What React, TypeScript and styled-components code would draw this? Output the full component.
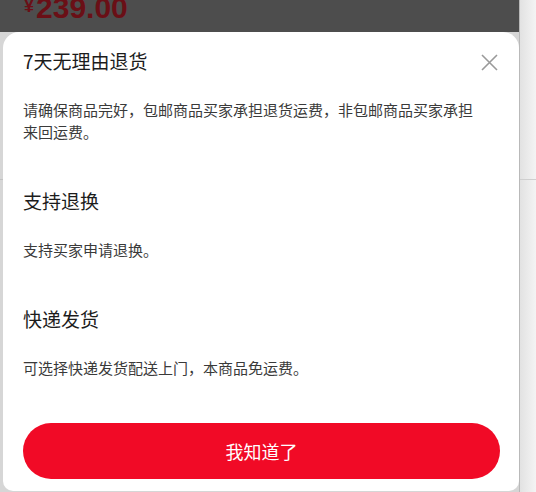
import React from "react";
import styled, { createGlobalStyle } from "styled-components";

const GlobalStyle = createGlobalStyle`
  html, body {
    margin: 0;
    padding: 0;
    width: 536px;
    height: 492px;
    overflow: hidden;
    background: #ececec;
  }
  * { box-sizing: border-box; }
`;

const Page = styled.div`
  display: grid;
  grid-template-columns: 519px 17px;
  width: 536px;
  height: 492px;
  font-family: "Noto Sans CJK SC", "Noto Sans", sans-serif;
`;

const MainColumn = styled.div`
  display: flex;
  flex-direction: column;
  height: 492px;
`;

const RightRail = styled.div`
  position: relative;
  height: 492px;
  border-left: 1px solid #b9b9b9;
  background: linear-gradient(to right, #e2e2e2, #f4f4f4);
  &::after {
    content: "";
    position: absolute;
    left: 0;
    right: 0;
    top: 179px;
    height: 1px;
    background: #cfcfcf;
  }
`;

const TopBar = styled.div`
  height: 32px;
  flex: none;
  background: #4d4d4d;
  display: flex;
  align-items: flex-start;
  padding-left: 24px;
  overflow: hidden;
`;

const Price = styled.div`
  display: flex;
  align-items: flex-start;
  color: #6a0f16;
  font-family: "Liberation Sans", Arial, sans-serif;
  font-weight: 700;
  margin-top: -7px;
`;

const Currency = styled.span`
  font-size: 18px;
  line-height: 18px;
  margin-top: 4px;
  margin-right: 2px;
  font-weight: 700;
`;

const Amount = styled.span`
  font-size: 30px;
  line-height: 30px;
`;

const Body = styled.div`
  flex: 1;
  display: flex;
  background: #d6d6d6;
`;

const LeftStrip = styled.div`
  width: 3px;
  flex: none;
  position: relative;
  &::after {
    content: "";
    position: absolute;
    left: 0;
    right: 0;
    top: 147px;
    height: 1px;
    background: #c2c2c2;
  }
`;

const Sheet = styled.div`
  width: 516px;
  height: 459px;
  background: #ffffff;
  border-radius: 16px 16px 10px 10px;
  padding: 16px 19px 12px 20px;
  display: flex;
  flex-direction: column;
`;

const Header = styled.div`
  display: flex;
  align-items: center;
  justify-content: space-between;
`;

const Title = styled.h2`
  margin: 0;
  font-size: 19px;
  line-height: 26px;
  font-weight: 400;
  color: #1c1c1c;
`;

const CloseButton = styled.button`
  border: none;
  background: transparent;
  padding: 0;
  width: 18px;
  height: 18px;
  margin-right: 2px;
  margin-top: 2px;
  display: flex;
  align-items: center;
  justify-content: center;
  cursor: pointer;
`;

const Section = styled.section<{ $first?: boolean }>`
  margin-top: ${(p) => (p.$first ? "0" : "45px")};
`;

const Desc = styled.p`
  margin: 25px 0 0;
  max-width: 455px;
  font-size: 15px;
  line-height: 22px;
  color: #3a3a3a;
`;

const Spacer = styled.div`
  flex: 1;
`;

const ConfirmButton = styled.button`
  width: 477px;
  height: 56px;
  border: none;
  border-radius: 28px;
  background: #f10a26;
  color: #ffffff;
  font-family: "Noto Sans CJK SC", "Noto Sans", sans-serif;
  font-size: 18px;
  line-height: 56px;
  padding: 0;
  cursor: pointer;
`;

const sections = [
  {
    title: "7天无理由退货",
    desc: "请确保商品完好，包邮商品买家承担退货运费，非包邮商品买家承担来回运费。",
  },
  { title: "支持退换", desc: "支持买家申请退换。" },
  { title: "快递发货", desc: "可选择快递发货配送上门，本商品免运费。" },
];

export default function App() {
  return (
    <>
      <GlobalStyle />
      <Page>
        <MainColumn>
          <TopBar>
            <Price>
              <Currency>¥</Currency>
              <Amount>239.00</Amount>
            </Price>
          </TopBar>
          <Body>
            <LeftStrip />
            <Sheet>
              {sections.map((s, i) => (
                <Section key={s.title} $first={i === 0}>
                  {i === 0 ? (
                    <Header>
                      <Title>{s.title}</Title>
                      <CloseButton aria-label="关闭">
                        <svg width="17" height="17" viewBox="0 0 17 17">
                          <path
                            d="M1 1 L16 16 M16 1 L1 16"
                            stroke="#9a9a9a"
                            strokeWidth="1.6"
                            fill="none"
                          />
                        </svg>
                      </CloseButton>
                    </Header>
                  ) : (
                    <Title>{s.title}</Title>
                  )}
                  <Desc>{s.desc}</Desc>
                </Section>
              ))}
              <Spacer />
              <ConfirmButton>我知道了</ConfirmButton>
            </Sheet>
          </Body>
        </MainColumn>
        <RightRail />
      </Page>
    </>
  );
}
